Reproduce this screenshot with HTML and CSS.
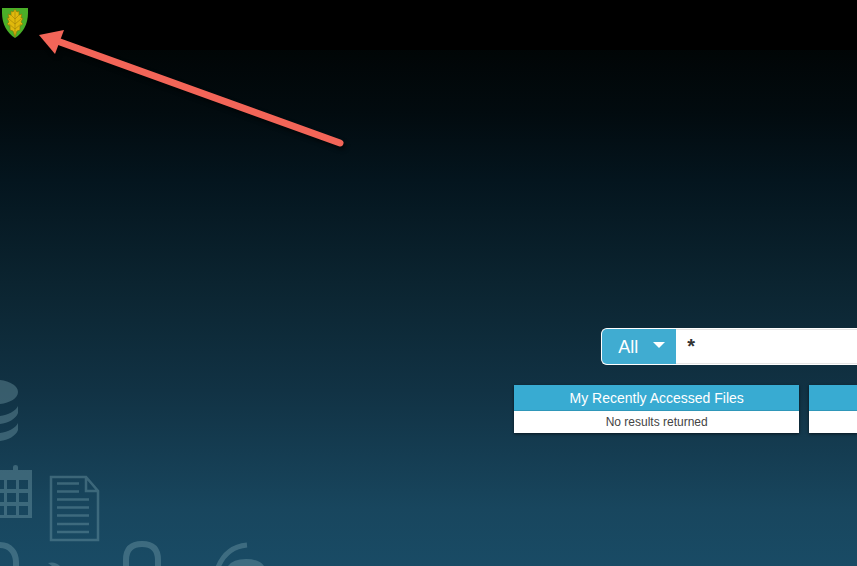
FILE: index.html
```html
<!DOCTYPE html>
<html lang="en">
<head>
<meta charset="utf-8">
<meta name="viewport" content="width=device-width, initial-scale=1">
<title>Search</title>
<link rel="stylesheet" href="styles.css">
</head>
<body>
<header class="topbar">
  <a class="brand" href="#" aria-label="Home">
    <svg class="crest" viewBox="0 0 28 32" aria-hidden="true">
      <path d="M1 1H27V6C27 17 22 26 14 31C6 26 1 17 1 6Z" fill="#4aaf28"/>
      <path d="M14 2L16 5L18 4L18 8L21 7L20 11L22 11L20 15L22 17L19 19L19 23L16 24L14 30L12 24L9 23L9 19L6 17L8 15L6 11L8 11L7 7L10 8L10 4L12 5Z" fill="#e0b90c" stroke="#857d0b" stroke-width=".7"/>
      <path d="M14 4V29M14 12L10 8M14 12L18 8M14 17L8 12M14 17L20 12M14 22L8 17M14 22L20 17" fill="none" stroke="#a07f08" stroke-width=".6"/>
    </svg>
  </a>
</header>
<main class="page">
  <form class="search">
    <div class="scope">
      <select class="scope-select" aria-label="Search scope"><option>All</option></select>
      <svg class="caret" viewBox="0 0 12 6" aria-hidden="true"><path d="M0 0H12L6 6Z" fill="#fff"/></svg>
    </div>
    <input class="query" type="text" value="*" aria-label="Search text">
  </form>
  <div class="cards">
    <section class="card">
      <h2 class="card-title">My Recently Accessed Files</h2>
      <p class="card-text">No results returned</p>
    </section>
    <section class="card card-fluid">
      <h2 class="card-title"></h2>
      <p class="card-text"></p>
    </section>
  </div>
</main>
<svg class="backdrop" viewBox="0 376 270 190" aria-hidden="true">
  <g fill="#7fa9b4" opacity=".36">
    <path d="M0 380C10 381 18 386 18 392S10 403 0 404Z"/>
    <path d="M18 406V413C16 419 8 423 0 424V416C8 415 16 411 18 406Z"/>
    <path d="M18 423V430C16 436 8 440 0 441V433C8 432 16 428 18 423Z"/>
    <path fill-rule="evenodd" d="M0 470H13V467Q13 465 15.500 465T18 467V470H32V518H0ZM0 480V489H4V480ZM7 480V489H16V480ZM19 480V489H28V480ZM0 493V502H4V493ZM7 493V502H16V493ZM19 493V502H28V493ZM0 506V515H4V506ZM7 506V515H16V506ZM19 506V515H28V506Z"/>
    <path d="M48 563Q55 561 60 566H52Z"/>
    <path d="M228 566Q233 559 246 559T264 566Z"/>
    <path d="M0 542C12 542 19 551 19 562V566H13V562C13 554 8 548 0 548Z"/>
  </g>
  <g fill="none" stroke="#7fa9b4" opacity=".36">
    <path stroke-width="2.500" d="M51 477H86L98 491V540H51ZM86 477V491H98"/>
    <path stroke-width="2.500" d="M57 483.500H79M57 491.500H79M57 499.500H89M57 507.500H89M57 515.500H89M57 524H89M57 532H89"/>
    <path stroke-width="6" d="M126 566V560Q126 544 142 544T158 560V566"/>
    <path stroke-width="5" d="M247 545Q225 547 217 570"/>
  </g>
</svg>
<svg class="pointer" viewBox="0 0 320 130" aria-hidden="true">
  <g fill="#f36558" stroke="#f36558">
    <path d="M30 17L310 118" stroke-width="7" stroke-linecap="round"/>
    <path d="M9 10L34 5L25 29Z" stroke="none"/>
  </g>
</svg>
</body>
</html>
```
FILE: styles.css
```css
* {
  box-sizing: border-box;
}

body {
  position: relative;
  min-height: 100vh;
  margin: 0;
  overflow: hidden;
  font-family: "Liberation Sans", Arial, sans-serif;
  background: linear-gradient(#000 0%, #010607 10%, #020b0f 20%, #04151e 32%, #0b2430 50%, #113244 69%, #18465e 90%, #194b65 100%);
}

.topbar {
  display: flex;
  height: 50px;
  padding: 7px 1px;
  background: #000;
}

.brand {
  width: 28px;
  height: 32px;
}

.crest {
  display: block;
}

.page {
  display: grid;
  grid-template-columns: minmax(0, 1fr);
  gap: 20px;
  padding: 278px 0 40px 60%;
}

.search {
  display: flex;
  height: 37px;
  margin-left: 87px;
  border: 1px solid #fff;
  border-right: 0;
  border-radius: 6px 0 0 6px;
  background: #fff;
}

.scope {
  position: relative;
  flex: none;
  width: 74px;
}

.scope-select {
  width: 100%;
  height: 100%;
  padding: 0 16px;
  border: 0;
  border-radius: 5px 0 0 5px;
  appearance: none;
  background: #40acd1;
  color: #fff;
  font: 18px/24px "Liberation Sans", Arial, sans-serif;
}

.caret {
  position: absolute;
  top: 13px;
  right: 11px;
  width: 12px;
  height: 6px;
  pointer-events: none;
}

.query {
  flex: 1;
  min-width: 0;
  padding: 0 11px 2px;
  border: 0;
  border-top: 1px solid #e5e5e5;
  border-bottom: 1px solid #e5e5e5;
  background: #fff;
  color: #333;
  font: bold 20px/24px "Liberation Sans", Arial, sans-serif;
}

.cards {
  display: flex;
  gap: 10px;
}

.card {
  flex: none;
  width: 285px;
  background: #fff;
  box-shadow: 0 1px 3px rgba(0, 0, 0, .6);
}

.card-fluid {
  flex: 1;
  width: auto;
  min-width: 0;
  max-width: 285px;
}

.card-title {
  height: 26px;
  margin: 0;
  border-bottom: 1px solid #2f97b9;
  background: #38abd2;
  color: #fff;
  font-size: 14px;
  font-weight: 400;
  line-height: 26px;
  text-align: center;
}

.card-text {
  height: 22px;
  margin: 0;
  color: #444;
  font-size: 12px;
  line-height: 22px;
  text-align: center;
}

.backdrop {
  position: absolute;
  bottom: 0;
  left: 0;
  width: 270px;
  height: 190px;
  pointer-events: none;
}

.pointer {
  position: absolute;
  top: 25px;
  left: 30px;
  width: 320px;
  height: 130px;
  filter: drop-shadow(2px 3px 2px rgba(0, 0, 0, .6));
  pointer-events: none;
}
```
